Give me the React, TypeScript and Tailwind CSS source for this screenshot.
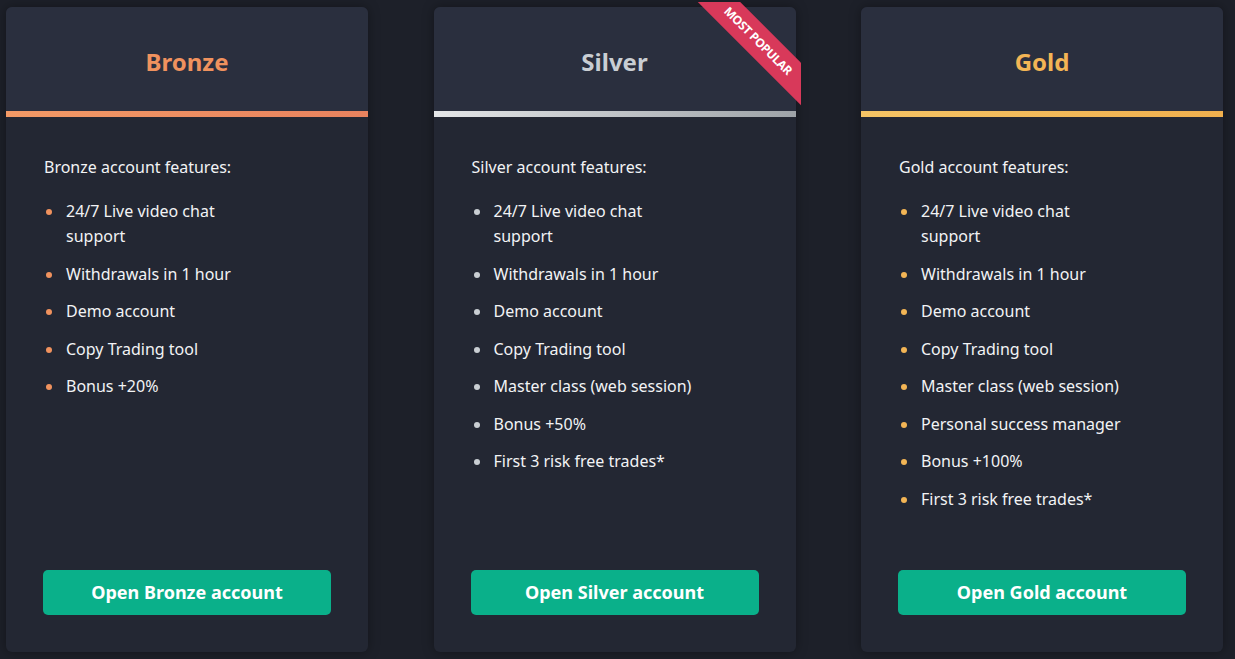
import React from "react";

interface Plan {
  name: string;
  titleClass: string;
  stripeClass: string;
  dotClass: string;
  features: string[];
  popular?: boolean;
}

const PLANS: Plan[] = [
  {
    name: "Bronze",
    titleClass: "text-[#f0925e]",
    stripeClass: "bg-gradient-to-r from-[#f39a66] to-[#e8825e]",
    dotClass: "bg-[#f0925e]",
    features: [
      "24/7 Live video chat support",
      "Withdrawals in 1 hour",
      "Demo account",
      "Copy Trading tool",
      "Bonus +20%",
    ],
  },
  {
    name: "Silver",
    titleClass: "text-[#c9ced3]",
    stripeClass: "bg-gradient-to-r from-[#e4e6e8] to-[#9ea3a8]",
    dotClass: "bg-[#c9ced3]",
    popular: true,
    features: [
      "24/7 Live video chat support",
      "Withdrawals in 1 hour",
      "Demo account",
      "Copy Trading tool",
      "Master class (web session)",
      "Bonus +50%",
      "First 3 risk free trades*",
    ],
  },
  {
    name: "Gold",
    titleClass: "text-[#f3b555]",
    stripeClass: "bg-gradient-to-r from-[#f5c465] to-[#f0b04e]",
    dotClass: "bg-[#f3b555]",
    features: [
      "24/7 Live video chat support",
      "Withdrawals in 1 hour",
      "Demo account",
      "Copy Trading tool",
      "Master class (web session)",
      "Personal success manager",
      "Bonus +100%",
      "First 3 risk free trades*",
    ],
  },
];

function PlanCard({ plan }: { plan: Plan }) {
  return (
    <div className="relative flex h-[645px] w-[362px] flex-col rounded-md bg-[#232733] shadow-[0_0_12px_rgba(0,0,0,0.35)]">
      {plan.popular && (
        <div className="absolute -right-[5px] -top-[5px] z-10 h-[105px] w-[105px] overflow-hidden">
          <div className="absolute left-[-28px] top-[24px] flex h-[30px] w-[180px] rotate-45 items-center justify-center bg-[#d8395a] text-[12px] font-bold uppercase tracking-tight text-white">
            Most Popular
          </div>
        </div>
      )}
      <div className="flex h-[104px] items-center justify-center rounded-t-md bg-[#2a2f3e] pt-[6px]">
        <h2 className={`text-[24px] font-bold ${plan.titleClass}`}>{plan.name}</h2>
      </div>
      <div className={`h-[6px] ${plan.stripeClass}`} />
      <div className="flex flex-1 flex-col px-[37px] pb-[37px] pt-[38px]">
        <p className="pl-[1px] text-[16px] leading-[24px] text-[#f2f3f5]">
          {plan.name} account features:
        </p>
        <ul className="mt-[20px] flex flex-col gap-[12.5px]">
          {plan.features.map((f) => (
            <li key={f} className="flex items-start text-[16px] leading-[25px] text-[#f2f3f5]">
              <span className={`mr-[14px] ml-[3px] mt-[10px] h-[6px] w-[6px] shrink-0 rounded-full ${plan.dotClass}`} />
              <span className="max-w-[210px]">{f}</span>
            </li>
          ))}
        </ul>
        <button className="mt-auto h-[45px] w-[288px] rounded-[5px] bg-[#0ab08a] text-[18px] font-bold text-white">
          Open {plan.name} account
        </button>
      </div>
    </div>
  );
}

export default function App() {
  return (
    <div
      className="min-h-[659px] w-full bg-[#1d2029] pl-[6px] pt-[7px]"
      style={{ fontFamily: '"Noto Sans", "Open Sans", sans-serif' }}
    >
      <div className="flex gap-[65.5px]">
        {PLANS.map((p) => (
          <PlanCard key={p.name} plan={p} />
        ))}
      </div>
    </div>
  );
}
